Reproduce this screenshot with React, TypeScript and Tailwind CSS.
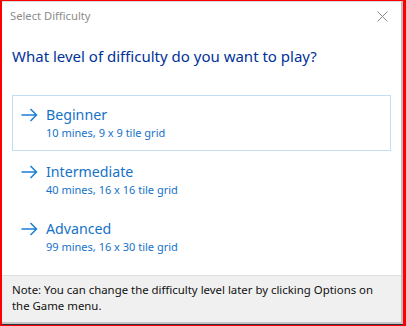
import React from "react";

type Level = {
  name: string;
  detail: string;
  hover?: boolean;
};

const levels: Level[] = [
  { name: "Beginner", detail: "10 mines, 9 x 9 tile grid", hover: true },
  { name: "Intermediate", detail: "40 mines, 16 x 16 tile grid" },
  { name: "Advanced", detail: "99 mines, 16 x 30 tile grid" },
];

function Arrow() {
  return (
    <svg width="17" height="14" viewBox="0 0 17 14" className="shrink-0">
      <path d="M0.5 7 H15.5 M9.5 1 L15.5 7 L9.5 13" fill="none" stroke="#1a7fd6" strokeWidth="1.5" />
    </svg>
  );
}

export default function App() {
  return (
    <div
      className="w-[406px] h-[326px] bg-[#ff0000] pl-[2px] pt-px pr-[3px] pb-px flex flex-col"
      style={{ fontFamily: '"Noto Sans", sans-serif' }}
    >
      <div className="flex-1 flex flex-col bg-white border-t border-t-[#d9d9d9] border-r-2 border-r-[#bdbdbd] border-b-2 border-b-[#c4c4c4] min-h-0">
        {/* title bar */}
        <div className="h-[29px] flex items-center justify-between pl-[8px] pr-[13px]">
          <span className="text-[11.2px] text-[#8c8c8c]">Select Difficulty</span>
          <svg width="11" height="11" viewBox="0 0 11 11">
            <path d="M0.5 0.5 L10.5 10.5 M10.5 0.5 L0.5 10.5" stroke="#8a8a8a" strokeWidth="1" />
          </svg>
        </div>

        <div className="flex-1 px-[10px]">
          <h1 className="mt-[15px] text-[15px] leading-[20px] text-[#003399]">
            What level of difficulty do you want to play?
          </h1>

          <div className="mt-[29px] flex flex-col gap-px">
            {levels.map((l) => (
              <div
                key={l.name}
                className={`h-[56px] flex items-start gap-[8px] pl-[8px] pt-[9px] border ${
                  l.hover ? "border-[#c3ddf2]" : "border-transparent"
                }`}
              >
                <div className="h-[20px] flex items-center">
                  <Arrow />
                </div>
                <div className="flex flex-col text-[#1572c8]">
                  <span className="text-[14.2px] leading-[20px]">{l.name}</span>
                  <span className="text-[11px] leading-[15px]">{l.detail}</span>
                </div>
              </div>
            ))}
          </div>
        </div>

        <div className="h-[47px] bg-[#f0f0f0] border-t border-[#dfdfdf] px-[10px] pt-[6px] text-[11.4px] leading-[16px] text-[#111]">
          Note: You can change the difficulty level later by clicking Options on the Game menu.
        </div>
      </div>
      <div className="h-px bg-[#2b3040]" />
    </div>
  );
}
